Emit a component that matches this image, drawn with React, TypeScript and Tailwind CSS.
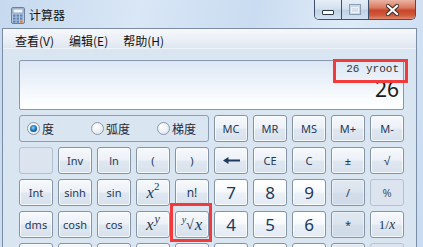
import React from 'react';

type V = 'n' | 'num' | 'op' | 'dis';

const vcls: Record<V, string> = {
  n: "border-[#8593a8] bg-[linear-gradient(180deg,#f5f8fc_0%,#edf2f8_48%,#dfe7f1_52%,#d7e1ed_100%)] shadow-[inset_0_0_0_1px_rgba(255,255,255,0.75)]",
  num: "border-[#8593a8] bg-[linear-gradient(180deg,#feffff_0%,#f7fafd_48%,#ebf1f8_52%,#e3eaf4_100%)] shadow-[inset_0_0_0_1px_rgba(255,255,255,0.9)]",
  op: "border-[#8593a8] bg-[linear-gradient(180deg,#e1e8f1_0%,#dae3ee_48%,#d3ddea_52%,#cfdae8_100%)] shadow-[inset_0_0_0_1px_rgba(255,255,255,0.45)]",
  dis: "border-[#b4c1d1] bg-[#dbe4ef]",
};

function Btn({ v = 'n', children, className = '' }: { v?: V; children?: React.ReactNode; className?: string }) {
  return (
    <div className={`flex items-center justify-center rounded-[3px] border text-[#1e395b] leading-none ${vcls[v]} ${className}`}>
      {children}
    </div>
  );
}

function T({ children }: { children: React.ReactNode }) {
  return <span className="text-[11px] leading-none font-['Noto_Sans',sans-serif]">{children}</span>;
}

function N({ children }: { children: React.ReactNode }) {
  return <span className="text-[17px] leading-none font-['Noto_Sans',sans-serif]">{children}</span>;
}

function Radio({ checked, label, w }: { checked?: boolean; label: string; w: string }) {
  return (
    <div className={`flex items-center ${w}`}>
      <span className="flex h-[13px] w-[13px] items-center justify-center rounded-full border border-[#8a9ab0] bg-[radial-gradient(circle_at_40%_35%,#ffffff_0%,#e9eef4_60%,#d3dbe5_100%)]">
        {checked && (
          <span className="h-[7px] w-[7px] rounded-full bg-[radial-gradient(circle_at_45%_40%,#8fdcff_0%,#2a84c6_40%,#0c4a84_75%,#082f58_100%)]" />
        )}
      </span>
      <span className="ml-[2px] text-[12px] leading-[14px] text-[#1e2b3c] font-['Noto_Sans_CJK_SC',sans-serif]">{label}</span>
    </div>
  );
}

function CalcIcon() {
  return (
    <svg width="18" height="17" viewBox="0 0 18 17">
      <rect x="2.5" y="0.5" width="13" height="16" rx="1.5" fill="#b9c9dc" stroke="#6c819d" />
      <rect x="4" y="2" width="10" height="4" fill="#eef5fc" stroke="#7d92ad" strokeWidth="0.8" />
      {[0, 1, 2].map((r) =>
        [0, 1, 2].map((c) => (
          <rect key={`${r}-${c}`} x={4 + c * 3.5} y={7.5 + r * 3} width="2.6" height="2.2" fill={c === 2 && r === 2 ? '#e07a3a' : '#5f86ba'} />
        ))
      )}
    </svg>
  );
}

function CaptionButtons() {
  return (
    <div className="mr-[7px] flex h-[20px] overflow-hidden rounded-b-[5px] border-x border-b border-[#3f5068]">
      <div className="flex w-[26px] items-end justify-center pb-[4px] bg-[linear-gradient(180deg,#e6eef8_0%,#d3e0ee_48%,#bfd1e6_52%,#d2e1f1_100%)]">
        <svg width="12" height="5" viewBox="0 0 12 5">
          <rect x="0.5" y="0.5" width="11" height="4" rx="0.5" fill="#ffffff" stroke="#2c3849" />
        </svg>
      </div>
      <div className="w-[1px] bg-[#3f5068]" />
      <div className="flex w-[26px] items-center justify-center bg-[linear-gradient(180deg,#e6eef8_0%,#d3e0ee_48%,#bfd1e6_52%,#d2e1f1_100%)]">
        <svg width="12" height="11" viewBox="0 0 12 11">
          <rect x="0.5" y="0.5" width="11" height="10" fill="#c9d6e4" stroke="#8d9eb3" />
          <rect x="2.5" y="3.5" width="7" height="5" fill="#d6e1ec" stroke="#eef3f8" />
        </svg>
      </div>
      <div className="w-[1px] bg-[#3f5068]" />
      <div className="flex w-[46px] items-center justify-center bg-[linear-gradient(180deg,#eab3a4_0%,#d97a60_40%,#c7472a_55%,#d0583a_80%,#df8a6e_100%)]">
        <svg width="13" height="12" viewBox="0 0 13 12">
          <path d="M2 2 L11 10 M11 2 L2 10" stroke="#3b2a26" strokeWidth="4.2" strokeLinecap="square" />
          <path d="M2 2 L11 10 M11 2 L2 10" stroke="#ffffff" strokeWidth="2.2" strokeLinecap="square" />
        </svg>
      </div>
    </div>
  );
}

const serif = "font-['Liberation_Serif',serif]";

export default function App() {
  return (
    <div className="relative h-[247px] w-[423px] overflow-hidden bg-[linear-gradient(100deg,#c6d9ef_0%,#d9e7f6_30%,#cadcf1_55%,#dfebf8_75%,#c8dbf0_100%)] font-['Noto_Sans',sans-serif]">
      {/* title bar */}
      <div className="flex h-[28px] justify-between">
        <div className="flex items-start pl-[9px] pt-[7px]">
          <CalcIcon />
          <span className="ml-[2px] mt-[1px] text-[12px] leading-[14px] text-[#111111] font-['Noto_Sans_CJK_SC',sans-serif]">计算器</span>
        </div>
        <CaptionButtons />
      </div>

      {/* client area */}
      <div className="ml-[2px] h-[219px] w-[415px] border-x border-t border-[#7b8da6] bg-[#dae5f2]">
        {/* menu */}
        <div className="flex h-[20px] items-start gap-[15px] border-b border-[#eef3f9] bg-[linear-gradient(180deg,#f6f8fc_0%,#eaeff6_60%,#dfe6f0_100%)] pl-[12px] pt-[5px] text-[12px] leading-[14px] text-[#111111] font-['Noto_Sans_CJK_SC',sans-serif]">
          <span>查看(V)</span>
          <span>编辑(E)</span>
          <span>帮助(H)</span>
        </div>

        {/* body */}
        <div className="pl-[16px] pt-[11px]">
          {/* display */}
          <div className="flex h-[50px] w-[385px] flex-col items-end rounded-[2px] border border-[#8797ad] bg-[linear-gradient(180deg,#dce7f5_0%,#e9f0f9_35%,#f8fbfe_75%,#ffffff_100%)] pr-[4px]">
            <div className="mt-[2px] text-[11px] leading-[13px] text-[#333333] font-['Liberation_Mono',monospace]">26 yroot</div>
            <div className="mt-[1px] text-[21px] leading-[24px] text-[#1a1a1a] font-['Noto_Sans',sans-serif]">26</div>
          </div>

          {/* keypad */}
          <div className="mt-[5px] grid grid-cols-[repeat(10,34px)] grid-rows-[repeat(5,27px)] gap-[5px]">
            <div className="col-span-5 flex items-center rounded-[3px] border border-[#8d9db2] pl-[7px]">
              <Radio checked label="度" w="w-[64px]" />
              <Radio label="弧度" w="w-[66px]" />
              <Radio label="梯度" w="w-[50px]" />
            </div>
            <Btn><T>MC</T></Btn>
            <Btn><T>MR</T></Btn>
            <Btn><T>MS</T></Btn>
            <Btn><T>M+</T></Btn>
            <Btn><T>M-</T></Btn>

            <Btn v="dis" />
            <Btn><T>Inv</T></Btn>
            <Btn><T>ln</T></Btn>
            <Btn><T>(</T></Btn>
            <Btn><T>)</T></Btn>
            <Btn>
              <svg width="17" height="7" viewBox="0 0 17 7">
                <path d="M0 3.5 L5.5 0 L5.5 2.4 L17 2.4 L17 4.6 L5.5 4.6 L5.5 7 Z" fill="#1e395b" />
              </svg>
            </Btn>
            <Btn><T>CE</T></Btn>
            <Btn><T>C</T></Btn>
            <Btn><T>±</T></Btn>
            <Btn><span className="text-[12px] leading-none">√</span></Btn>

            <Btn><T>Int</T></Btn>
            <Btn><T>sinh</T></Btn>
            <Btn><T>sin</T></Btn>
            <Btn>
              <span className={`${serif} text-[17px] italic leading-none`}>x</span>
              <span className={`${serif} relative top-[-6px] text-[11px] leading-none`}>2</span>
            </Btn>
            <Btn><span className="text-[12px] leading-none">n!</span></Btn>
            <Btn v="num"><N>7</N></Btn>
            <Btn v="num"><N>8</N></Btn>
            <Btn v="num"><N>9</N></Btn>
            <Btn v="op"><T>/</T></Btn>
            <Btn v="dis"><span className="text-[11px] leading-none text-[#3d5675]">%</span></Btn>

            <Btn><T>dms</T></Btn>
            <Btn><T>cosh</T></Btn>
            <Btn><T>cos</T></Btn>
            <Btn>
              <span className={`${serif} text-[17px] italic leading-none`}>x</span>
              <span className={`${serif} relative top-[-6px] ml-[1px] text-[12px] italic leading-none`}>y</span>
            </Btn>
            <Btn>
              <span className={`${serif} relative top-[-5px] text-[10px] italic leading-none`}>y</span>
              <span className={`${serif} text-[14px] leading-none`}>√</span>
              <span className={`${serif} ml-[1px] text-[17px] italic leading-none`}>x</span>
            </Btn>
            <Btn v="num"><N>4</N></Btn>
            <Btn v="num"><N>5</N></Btn>
            <Btn v="num"><N>6</N></Btn>
            <Btn v="op"><T>*</T></Btn>
            <Btn>
              <span className={`${serif} text-[13px] leading-none`}>1/</span>
              <span className={`${serif} text-[14px] italic leading-none`}>x</span>
            </Btn>

            <Btn />
            <Btn />
            <Btn />
            <Btn />
            <Btn />
            <Btn v="num" />
            <Btn v="num" />
            <Btn v="num" />
            <Btn v="op" />
            <Btn v="dis" />
          </div>
        </div>
      </div>

      {/* annotation boxes */}
      <div className="pointer-events-none absolute left-[333px] top-[59px] h-[24px] w-[75px] border-[3px] border-[#f23a3a]" />
      <div className="pointer-events-none absolute left-[170px] top-[203px] h-[39px] w-[42px] border-[3px] border-[#f23a3a]" />
    </div>
  );
}
